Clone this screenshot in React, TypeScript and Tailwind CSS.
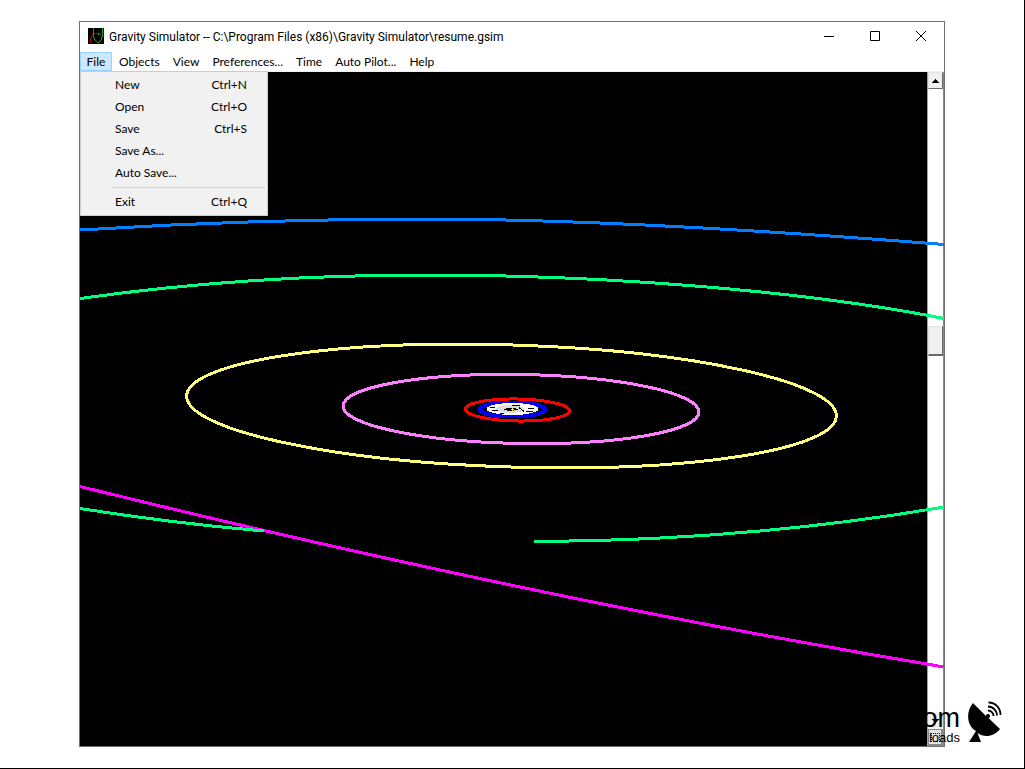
const MENUS = ['Objects', 'View', 'Preferences...', 'Time', 'Auto Pilot...', 'Help'];

const FILE_ITEMS = [
  { label: 'New', keys: 'Ctrl+N' },
  { label: 'Open', keys: 'Ctrl+O' },
  { label: 'Save', keys: 'Ctrl+S' },
  { label: 'Save As...', keys: '' },
  { label: 'Auto Save...', keys: '' },
];

function MenuItem({ label, keys }: { label: string; keys: string }) {
  return (
    <button type="button" role="menuitem" className="flex h-[22px] w-full items-center justify-between pl-[34px] pr-5">
      <span>{label}</span>
      <span>{keys}</span>
    </button>
  );
}

function AppIcon() {
  return (
    <svg className="size-4" viewBox="0 0 16 16" fill="none" shapeRendering="crispEdges" aria-hidden="true">
      <path d="M0 0h16v16H0z" fill="#000" />
      <path d="M2.500 15V11L4.500 7L7 5H11L13 8" stroke="#a00" />
      <path d="M5.500 0V9L7 12L9 14H11L13 12L14.500 8V0" stroke="#0a2" />
      <path d="M10.500 5v2" stroke="#0a2" />
    </svg>
  );
}

function TitleBar() {
  const button = 'flex h-full w-[46px] items-center justify-center pb-[2px]';
  return (
    <header className="flex h-[30px] items-center">
      <div className="flex flex-1 items-center gap-[5px] pl-2 pb-[2px]">
        <AppIcon />
        <h1 className="pt-[2px] font-['Roboto',sans-serif]">
          Gravity Simulator -- C:\Program Files (x86)\Gravity Simulator\resume.gsim
        </h1>
      </div>
      <button type="button" aria-label="Minimize" className={button}>
        <svg className="size-[10px]" viewBox="0 0 10 10" aria-hidden="true">
          <path d="M0 5h10v1H0z" />
        </svg>
      </button>
      <button type="button" aria-label="Maximize" className={button}>
        <svg className="size-[10px]" viewBox="0 0 10 10" fill="none" stroke="#000" aria-hidden="true">
          <path d="M.5 .5h9v9h-9z" />
        </svg>
      </button>
      <button type="button" aria-label="Close" className={button}>
        <svg className="size-[10px]" viewBox="0 0 10 10" fill="none" stroke="#000" aria-hidden="true">
          <path d="M0 0l10 10M10 0L0 10" />
        </svg>
      </button>
    </header>
  );
}

function MenuBar() {
  return (
    <nav className="flex h-5 border-b border-[#f0f0f0]">
      <div className="relative">
        <button
          type="button"
          aria-haspopup="menu"
          aria-expanded="true"
          className="flex h-[19px] w-8 items-center justify-center border border-[#99d1ff] bg-[#cce8ff]"
        >
          File
        </button>
        <div
          role="menu"
          className="absolute left-0 top-full z-20 w-[188px] border border-[#ccc] bg-[#f1f1f1] py-[2px]"
        >
          {FILE_ITEMS.map((item) => (
            <MenuItem key={item.label} {...item} />
          ))}
          <hr className="my-[3px] ml-[31px] mr-[2px] border-t border-[#d4d4d4]" />
          <MenuItem label="Exit" keys="Ctrl+Q" />
        </div>
      </div>
      {MENUS.map((name) => (
        <button key={name} type="button" className="flex h-[19px] items-center pl-[7px] pr-[6px]">
          {name}
        </button>
      ))}
    </nav>
  );
}

function Orbits() {
  return (
    <svg
      className="pointer-events-none absolute inset-0 z-10 h-full w-full"
      viewBox="80 72 864 674"
      preserveAspectRatio="none"
      fill="none"
      strokeWidth="3"
      shapeRendering="crispEdges"
      aria-hidden="true"
    >
      <path stroke="#0080ff" d="M80 230C190 223 310 219 430 219C600 219.500 780 231.500 944 244.500" />
      <path stroke="#ff00ff" d="M80 486.500C370 558 650 618 944 667" />
      <path stroke="#00ff80" d="M80 298.500C190 283 310 275 425 275C600 275 800 290 944 318.500" />
      <path stroke="#00ff80" d="M80 508.500C140 518 205 526 264 531" />
      <path stroke="#00ff80" d="M534 541.500C680 541 810 530 944 507" />
      <ellipse stroke="#ffff80" cx="511.500" cy="406" rx="325" ry="61" transform="rotate(1.8 511.500 406)" />
      <ellipse stroke="#ff80ff" cx="521" cy="409" rx="178" ry="34.500" transform="rotate(1 521 409)" />
      <ellipse stroke="#ff0000" cx="517.500" cy="410" rx="52" ry="11" transform="rotate(1 517.500 410)" />
      <ellipse stroke="#0000ff" strokeWidth="4" cx="512.500" cy="409.500" rx="33" ry="7" />
      <ellipse fill="#ffffff" cx="512.500" cy="409" rx="26" ry="6" />
      <ellipse fill="#dcdcdc" cx="510" cy="409" rx="14" ry="4" />
      <path stroke="#000000" strokeWidth="1" d="M490 407.500h5M492 410.500h6M504 409.500h14M506 408.500h10M507 410.500h7M519 407.500l5 4M528 408.500h6M526 411.500h7M500 413.500h4M512 405.500h8" />
      <path fill="#ffff00" d="M511 409h1v-1h1v1h1v1h-1v1h-1v-1h-1z" />
    </svg>
  );
}

function ScrollBar() {
  const button =
    'flex h-[17px] w-full items-center justify-center border border-l-[#e3e3e3] border-t-[#e3e3e3] border-b-[#696969] border-r-[#696969] bg-[#f0f0f0]';
  return (
    <div className="flex w-[17px] flex-col border-l border-r border-l-[#a0a0a0] border-r-[#8a8a8a] bg-white">
      <button type="button" aria-label="Scroll up" className={button}>
        <svg className="h-1 w-[7px]" viewBox="0 0 7 4" aria-hidden="true">
          <path d="M3 0h1v1h1v1h1v1h1v1H0V3h1V2h1V1h1z" />
        </svg>
      </button>
      <div className="flex flex-1 flex-col">
        <div className="flex-[237]" />
        <div className="h-[30px] border border-b-2 border-l-[#e3e3e3] border-r-[#696969] border-t-[#e3e3e3] border-b-[#696969] bg-[#f0f0f0]" />
        <div className="flex-[356]" />
      </div>
      <button type="button" aria-label="Scroll down" className="flex h-[17px] items-center justify-center bg-[#f0f0f0]">
        <svg className="h-1 w-[7px]" viewBox="0 0 7 4" aria-hidden="true">
          <path d="M0 0h7v1H6v1H5v1H4v1H3V3H2V2H1V1H0z" />
        </svg>
      </button>
      <div className="flex h-[17px] items-center justify-center border border-b-2 border-r-2 border-[#8a8a8a] bg-[#e3e3e3]">
        <div className="size-[9px] border border-dotted border-black" />
      </div>
    </div>
  );
}

function SiteBadge() {
  return (
    <div className="absolute bottom-[23px] right-[22px] z-30 flex items-end gap-2 font-['Liberation_Sans',sans-serif] text-black">
      <div className="flex flex-col items-end">
        <span className="text-[27px] leading-[26px]">om</span>
        <span className="text-[13px] leading-[14px]">loads</span>
      </div>
      <svg className="h-11 w-[34px]" viewBox="0 0 34 44" fill="none" aria-hidden="true">
        <path fill="#000" d="M5 2C-1 9 -2 21 5 28L8 30L1 41H13L9.500 32C16 37 26 36 32 28L20.500 17L22 15L19.500 13L18 15Z" />
        <circle cx="20" cy="15" r="2" fill="#000" />
        <path
          stroke="#000"
          strokeWidth="1.800"
          d="M20 9.500C23 9.500 25.500 12 25.500 15M20 5.500C25.500 5.500 29 10 29 14.500M20.500 1.500C27.500 1.500 32.500 7 32.500 14"
        />
      </svg>
    </div>
  );
}

export default function App() {
  return (
    <div className="relative flex min-h-screen flex-col border-b border-r border-black bg-white pb-[21px] pl-[79px] pr-[79px] pt-[21px] font-['Lato','Open_Sans',sans-serif] text-[12px] leading-4 text-black">
      <main className="flex flex-1 flex-col border border-[#6f6f6f]">
        <TitleBar />
        <MenuBar />
        <div className="relative flex flex-1 bg-black">
          <div className="flex-1" />
          <ScrollBar />
          <Orbits />
        </div>
      </main>
      <SiteBadge />
    </div>
  );
}
